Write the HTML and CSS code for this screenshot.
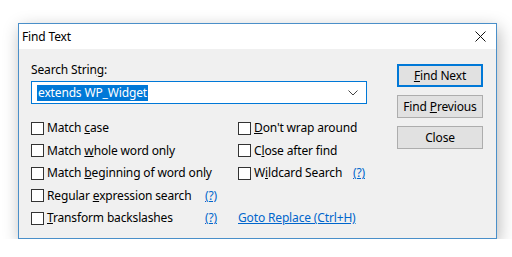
FILE: index.html
```html
<!DOCTYPE html>
<html lang="en">
<head>
    <meta charset="UTF-8">
    <title>Find Text</title>
    <link rel="stylesheet" href="styles.css">
</head>
<body>
    <div class="window">
        <div class="titlebar">
            <span class="title">Find Text</span>
            <svg class="close-x" width="11" height="11" viewBox="0 0 11 11">
                <path d="M0.5 0.5 L10.5 10.5 M10.5 0.5 L0.5 10.5" stroke="#111" stroke-width="1" fill="none"/>
            </svg>
        </div>
        <div class="content">
            <div class="left">
                <div class="label">Search Strin<u>g</u>:</div>
                <div class="combo">
                    <span class="selected">extends WP_Widget</span>
                    <svg class="arrow" width="10" height="6" viewBox="0 0 10 6">
                        <path d="M0.5 0.5 L5 5 L9.5 0.5" stroke="#444" stroke-width="1" fill="none"/>
                    </svg>
                </div>
                <div class="options">
                    <label class="opt"><span class="box"></span><span>Match <u>c</u>ase</span></label>
                    <span></span>
                    <label class="opt wide"><span class="box"></span><span><u>D</u>on't wrap around</span></label>

                    <label class="opt"><span class="box"></span><span>Match <u>w</u>hole word only</span></label>
                    <span></span>
                    <label class="opt wide"><span class="box"></span><span>C<u>l</u>ose after find</span></label>

                    <label class="opt"><span class="box"></span><span>Match <u>b</u>eginning of word only</span></label>
                    <span></span>
                    <label class="opt"><span class="box"></span><span>W<u>i</u>ldcard Search</span></label>
                    <a class="help">(?)</a>

                    <label class="opt"><span class="box"></span><span>Regular <u>e</u>xpression search</span></label>
                    <a class="help">(?)</a>
                    <span></span>
                    <span></span>

                    <label class="opt"><span class="box"></span><span><u>T</u>ransform backslashes</span></label>
                    <a class="help">(?)</a>
                    <a class="link wide">Goto Replace (Ctrl+H)</a>
                </div>
            </div>
            <div class="buttons">
                <button class="btn default"><u>F</u>ind Next</button>
                <button class="btn">Find <u>P</u>revious</button>
                <button class="btn">Close</button>
            </div>
        </div>
    </div>
</body>
</html>
```

FILE: styles.css
```css
body {
    margin: 0;
    background-color: #FFFFFF;
    font-family: "Noto Sans", Arial, sans-serif;
    font-size: 12px;
    letter-spacing: -0.15px;
    color: #000;
    padding: 23px 0 0 18px;
}
.window {
    width: 479px;
    height: 216px;
    box-sizing: border-box;
    border: 1px solid #4a8fc9;
    background-color: #F0F0F0;
    box-shadow: 2px 5px 16px rgba(0, 0, 0, 0.28);
    display: flex;
    flex-direction: column;
}
.titlebar {
    height: 25px;
    background-color: #FFFFFF;
    display: flex;
    align-items: center;
    padding: 0 10px 0 3px;
}
.title {
    flex: 1;
    line-height: 16px;
}
.close-x { display: block; }
.content {
    display: flex;
    padding: 13px 13px 0 12px;
}
.left { width: 336px; }
.label {
    line-height: 16px;
    margin-bottom: 3px;
}
.combo {
    height: 23px;
    box-sizing: border-box;
    border: 1px solid #0078d7;
    background-color: #FFFFFF;
    display: flex;
    align-items: center;
    padding: 0 4px 0 5px;
}
.selected {
    background-color: #0078d7;
    color: #FFFFFF;
    line-height: 16px;
    padding: 0 1px;
    flex: none;
}
.arrow { margin-left: auto; margin-right: 4px; }
.options {
    display: grid;
    grid-template-columns: 174px 33px 115px auto;
    grid-auto-rows: 22.5px;
    margin-top: 13px;
}
.opt {
    display: flex;
    align-items: center;
    white-space: nowrap;
    line-height: 16px;
}
.box {
    width: 13px;
    height: 13px;
    box-sizing: border-box;
    border: 1px solid #333;
    background-color: #FFFFFF;
    margin-right: 3px;
    flex: none;
}
.help, .link {
    color: #0066cc;
    text-decoration: underline;
    align-self: center;
    line-height: 16px;
    white-space: nowrap;
}
.wide { grid-column: span 2; }
.buttons {
    margin-left: auto;
    margin-top: 2px;
    display: flex;
    flex-direction: column;
    gap: 8px;
}
.btn {
    width: 86px;
    height: 23px;
    box-sizing: border-box;
    background-color: #e1e1e1;
    border: 1px solid #adadad;
    font-family: "Noto Sans", Arial, sans-serif;
    font-size: 12px;
    letter-spacing: -0.15px;
    color: #000;
    padding: 0;
}
.btn.default { border: 2px solid #0078d7; }
```
